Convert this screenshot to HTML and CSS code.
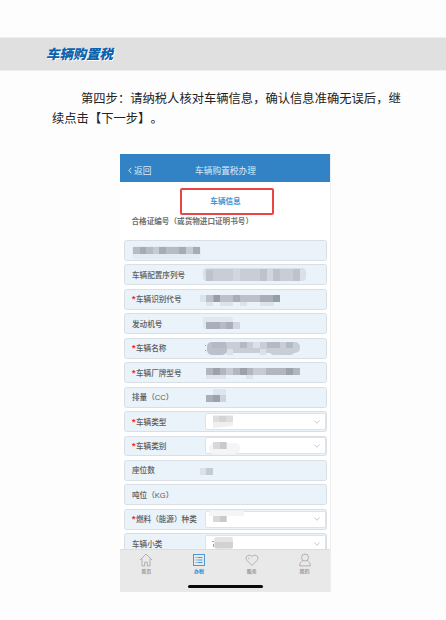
FILE: index.html
```
<!DOCTYPE html>
<html lang="zh-CN">
<head>
    <meta charset="UTF-8">
    <meta name="viewport" content="width=device-width, initial-scale=1.0">
    <title>车辆购置税</title>
    <link rel="stylesheet" href="styles.css">
</head>
<body>

<header class="banner">
    <h1>车辆购置税</h1>
</header>

<p class="step">第四步：请纳税人核对车辆信息，确认信息准确无误后，继<br>续点击【下一步】。</p>

<main class="phone">
    <div class="navbar">
        <span class="back"><svg width="4" height="7" viewBox="0 0 4 7"><path d="M3.3 .8 .9 3.5l2.4 2.7"/></svg>返回</span>
        <span class="nav-title">车辆购置税办理</span>
    </div>

    <div class="tab">车辆信息</div>
    <div class="cert-label">合格证编号（或货物进口证明书号）</div>

    <div class="form">
        <div class="row">
            <svg class="mosaic" viewBox="0 0 110 20">
                <rect x="0" y="6" width="69" height="13" rx="4" fill="#e3ebf3"/>
                <path fill="#b6bcc5" d="M1 7h67v7H1z"/>
                <path fill="#a6acb5" d="M8 7h6v7H8zM27 7h7v7h-7zM47 7h7v7h-7zM61 7h7v7h-7z"/>
                <path fill="#c6ccd4" d="M21 7h6v7h-6zM54 7h7v7h-7z"/>
            </svg>
        </div>
        <div class="row"><label>车辆配置序列号</label>
            <svg class="mosaic" viewBox="0 0 110 20">
                <rect x="3" y="3" width="103" height="13" rx="4" fill="#dae0e8"/>
                <path fill="#c8cdd6" d="M6 4h94v12H6z"/>
                <path fill="#bdc2cb" d="M6 5h7v11H6zM60 4h7v12h-7zM73 4h7v12h-7zM93 4h7v12h-7z"/>
                <path fill="#d2d7df" d="M33 4h7v12h-7zM67 4h6v12h-6z"/>
            </svg>
        </div>
        <div class="row"><label><i>*</i>车辆识别代号</label>
            <svg class="mosaic" viewBox="0 0 110 20">
                <path fill="#dce3eb" d="M0 6h6v7H0zM6 13h7v4H6zM20 13h13v4H20zM40 13h7v4h-7zM60 13h14v4H60z"/>
                <path fill="#bbc0c9" d="M6 6h54v7H6z"/>
                <path fill="#a9adb7" d="M13 6h7v7h-7zM33 6h7v7h-7zM60 6h20v7H60z"/>
                <path fill="#989ca6" d="M14 6h6v7h-6zM73 6h7v7h-7z"/>
            </svg>
        </div>
        <div class="row"><label>发动机号</label>
            <svg class="mosaic" viewBox="0 0 110 20">
                <rect x="3" y="3" width="30" height="12" rx="3" fill="#e0e7ee"/>
                <path fill="#a9aeb8" d="M6 8h27v7H6z"/>
                <path fill="#b5bac4" d="M20 8h6v7h-6z"/>
                <path fill="#ced6df" d="M33 8h7v7h-7z"/>
            </svg>
        </div>
        <div class="row"><label><i>*</i>车辆名称</label>
            <svg class="mosaic" viewBox="0 0 110 20">
                <rect x="7" y="4" width="93" height="11" rx="5" fill="#c8cdd6"/>
                <rect x="7" y="4" width="20" height="13" rx="5" fill="#bbc0ca"/>
                <rect x="70" y="7" width="24" height="10" rx="4" fill="#c8cdd6"/>
                <path fill="#b4b9c3" d="M12 4h14v6H12zM40 4h7v6h-7zM67 4h13v6H67zM86 4h7v6h-7z"/>
                <path fill="#dce1e8" d="M27 11h6v6h-6zM53 4h7v6h-7zM60 11h6v6h-6z"/>
                <path fill="#989ea8" d="M5 7h1v1H5zM5 12h1v1H5z"/>
            </svg>
        </div>
        <div class="row"><label><i>*</i>车辆厂牌型号</label>
            <svg class="mosaic" viewBox="0 0 110 20">
                <path fill="#dfe5ed" d="M6 12h20v4H6zM46 12h7v4h-7z"/>
                <path fill="#b1b6bf" d="M6 5h94v7H6z"/>
                <path fill="#9ca1ab" d="M13 5h7v7h-7zM40 5h7v7h-7zM86 5h7v7h-7z"/>
                <path fill="#c7ccd4" d="M26 5h7v7h-7zM53 5h13v7H53z"/>
            </svg>
        </div>
        <div class="row"><label>排量（CC）</label>
            <svg class="mosaic" viewBox="0 0 110 20">
                <path fill="#dfe5ec" d="M13 2h13v6H13z"/>
                <path fill="#a9aeb8" d="M6 8h14v7H6z"/>
                <path fill="#9ca2ad" d="M13 8h7v7h-7z"/>
                <path fill="#ced4dd" d="M20 8h6v7h-6z"/>
            </svg>
        </div>
        <div class="row"><label><i>*</i>车辆类型</label>
            <div class="select">
                <svg class="blur" viewBox="0 0 50 16"><path fill="#efefef" d="M7 1h20v11L7 14z"/><path fill="#dedede" d="M7 2h20v6H7z"/><path fill="#d4d4d4" d="M13 2h7v6h-7z"/></svg>
                <svg class="arrow" viewBox="0 0 6 4"><path d="M.5 .5 3 3.3 5.500 .5"/></svg>
            </div>
        </div>
        <div class="row"><label><i>*</i>车辆类别</label>
            <div class="select">
                <svg class="blur" viewBox="0 0 50 16"><rect x="3" y="5" width="31" height="11" rx="5" fill="#f5f5f5"/><path fill="#d8d8d8" d="M7 4h14v7H7z"/><path fill="#c9c9c9" d="M14 4h6v7h-6z"/></svg>
                <svg class="arrow" viewBox="0 0 6 4"><path d="M.5 .5 3 3.3 5.500 .5"/></svg>
            </div>
        </div>
        <div class="row"><label>座位数</label>
            <svg class="mosaic" viewBox="0 0 110 20">
                <path fill="#dce2ea" d="M0 8h6v7H0z"/>
                <path fill="#c4cad6" d="M6 8h7v7H6z"/>
            </svg>
        </div>
        <div class="row"><label>吨位（KG）</label></div>
        <div class="row"><label><i>*</i>燃料（能源）种类</label>
            <div class="select">
                <svg class="blur" viewBox="0 0 50 16"><rect x="3" y="0" width="35" height="5" fill="#f5f5f5"/><path fill="#d8d8d8" d="M7 5h14v6H7z"/><path fill="#c9c9c9" d="M14 5h6v6h-6z"/></svg>
                <svg class="arrow" viewBox="0 0 6 4"><path d="M.5 .5 3 3.3 5.500 .5"/></svg>
            </div>
        </div>
        <div class="row"><label>车辆小类</label>
            <div class="select">
                <svg class="blur" viewBox="0 0 50 16"><rect x="8" y="1" width="19" height="12" rx="3" fill="#e4e4e4"/><path fill="#d2d2d2" d="M9 6h18v6H9z"/><path fill="#a0a0a0" d="M6 5h2v1H6zM7 8h1v3H7z"/></svg>
                <svg class="arrow" viewBox="0 0 6 4"><path d="M.5 .5 3 3.3 5.500 .5"/></svg>
            </div>
        </div>
    </div>

    <nav class="tabbar">
        <a class="item">
            <svg viewBox="0 0 14 14"><path d="M1 7 7 1l6 6M3 5.500V13h2.700V9.200h2.600V13H11V5.500"/></svg>
            首页
        </a>
        <a class="item active">
            <svg viewBox="0 0 14 14"><rect x="1.500" y="1.500" width="11" height="11"/><path d="M3.500 4.500h1M5.500 4.500h5M3.500 7h1M5.500 7h5M3.500 9.500h1M5.500 9.500h5"/></svg>
            办税
        </a>
        <a class="item">
            <svg viewBox="0 0 14 14"><path d="M7 12.500 2 7.500C-.8 4.500 3-.2 7 3.500c4-3.700 7.800 1 5 4zM3 4.800 4.500 6"/></svg>
            服务
        </a>
        <a class="item">
            <svg viewBox="0 0 14 14"><circle cx="7" cy="4.500" r="3.500"/><path d="M5 7.500C2.800 8.500 1.800 10 1.700 12.900h10.600C12.200 10 11.200 8.500 9 7.500"/></svg>
            我的
        </a>
        <div class="home-bar"></div>
    </nav>
</main>

</body>
</html>
```
FILE: styles.css
```
* {
    box-sizing: border-box;
}

body {
    margin: 0;
    padding-top: 37px;
    height: 620px;
    overflow: hidden;
    background-color: #fdfdfd;
    color: #222;
    font-family: "Noto Sans CJK SC", "Liberation Sans", sans-serif;
    text-spacing-trim: space-all;
}

.banner {
    display: flex;
    align-items: center;
    height: 34px;
    padding: 0 0 2px 46px;
    background-color: #e0e0e0;
    border-top: 1px solid #eee;
    border-bottom: 1px solid #eee;
}

h1 {
    margin: 0;
    font-size: 13.4px;
    line-height: 20px;
    font-weight: 900;
    font-style: italic;
    color: #0d62ae;
    text-shadow: 1px 1px 0 #fff;
}

.step {
    margin: 17px 0 0 52px;
    font-size: 12.3px;
    line-height: 20px;
    text-indent: 29px;
    white-space: nowrap;
}

/* Phone screen */
.phone {
    display: flex;
    flex-direction: column;
    width: 211px;
    height: 438px;
    margin: 26px 0 0 120px;
    background-color: #fff;
    border-right: 1px solid #eee;
    overflow: hidden;
}

.navbar {
    display: grid;
    grid-template-columns: 1fr auto 1fr;
    align-items: center;
    flex: none;
    width: 211px;
    height: 28px;
    padding: 4px 0 0 8px;
    background-color: #3183c5;
    color: #d9ebf8;
    font-size: 8.7px;
}

.back {
    display: flex;
    align-items: center;
    gap: 2px;
}

.back svg {
    fill: none;
    stroke: #d9ebf8;
}

.nav-title {
    margin-right: 8px;
}

.tab {
    flex: none;
    width: 94px;
    height: 27px;
    margin: 6px 0 0 60px;
    border: 2px solid #e84545;
    border-radius: 2px;
    color: #3e96d2;
    font-size: 7.6px;
    font-weight: 700;
    line-height: 22px;
    text-align: center;
    text-indent: -3px;
}

.cert-label {
    flex: none;
    height: 24px;
    padding-left: 11.5px;
    font-size: 7.6px;
    line-height: 12px;
    font-weight: 700;
    color: #707070;
}

.form {
    display: flex;
    flex-direction: column;
    flex: 1;
    gap: 3.5px;
    min-height: 0;
    padding: 1px 3px 0 4px;
    overflow: hidden;
}

.row {
    display: flex;
    align-items: center;
    flex: none;
    height: 20.95px;
    padding-left: 7px;
    background-color: #eaf2fa;
    border: 1px solid #d9dfe4;
    border-radius: 2.5px;
}

.row label {
    flex: none;
    width: 68px;
    padding-top: 2px;
    font-family: "Liberation Sans", "Noto Sans CJK SC", sans-serif;
    font-size: 7.6px;
    font-weight: 500;
    line-height: 12px;
    color: #5c5c5c;
    white-space: nowrap;
}

.row i {
    display: inline-block;
    width: 4px;
    color: #f22;
    font-size: 9px;
    font-weight: 700;
    line-height: 8px;
    font-style: normal;
}

.mosaic {
    width: 110px;
    height: 20px;
}

.select {
    display: flex;
    align-items: center;
    justify-content: space-between;
    flex: 1;
    height: 17px;
    margin-left: 5px;
    padding-right: 5px;
    background-color: #fff;
    border: 1px solid #dfe3e6;
    border-radius: 2px;
}

.blur {
    width: 50px;
    height: 16px;
}

.arrow {
    width: 6px;
    height: 4px;
    fill: none;
    stroke: #bbb;
    stroke-width: .8;
}

/* Bottom tabs */
.tabbar {
    display: grid;
    grid-template-columns: repeat(4, 1fr);
    align-content: start;
    flex: none;
    width: 211px;
    height: 43px;
    padding-top: 3px;
    background-color: #e9e9e9;
    border-top: 1px solid #ddd;
}

.item {
    display: flex;
    flex-direction: column;
    align-items: center;
    font-size: 5px;
    line-height: 8px;
    font-weight: 700;
    color: #999;
}

.item svg {
    width: 14px;
    height: 14px;
    fill: none;
    stroke: #aaa;
    stroke-width: .9;
}

.item.active {
    color: #3289d3;
}

.item.active svg {
    stroke: #3b91d8;
}

.home-bar {
    grid-column: 1 / -1;
    justify-self: center;
    width: 75px;
    height: 3px;
    margin-top: 10px;
    background-color: #0a0a0a;
    border-radius: 2px;
}
```
